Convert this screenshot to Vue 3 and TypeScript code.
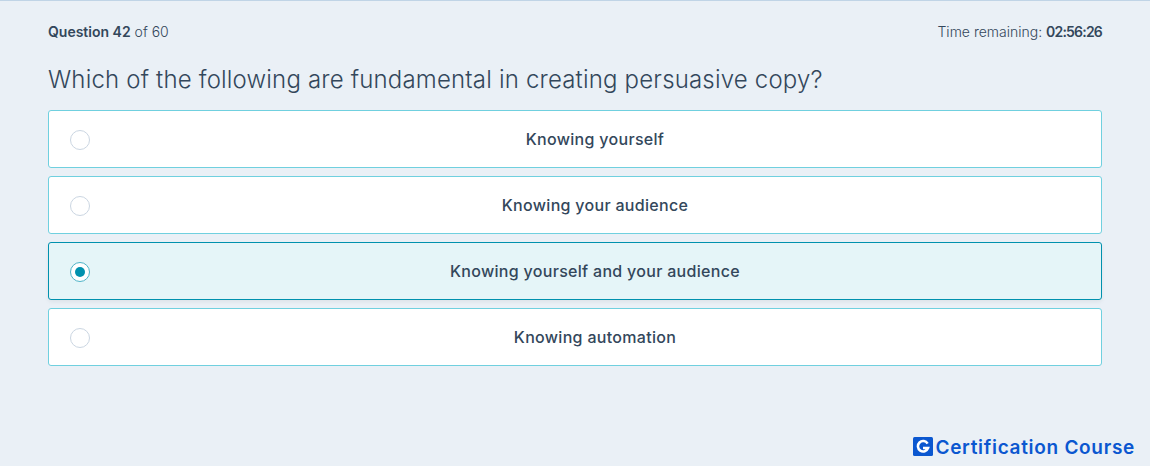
<script setup lang="ts">
interface Option { id: number; label: string }
const options: Option[] = [
  { id: 1, label: 'Knowing yourself' },
  { id: 2, label: 'Knowing your audience' },
  { id: 3, label: 'Knowing yourself and your audience' },
  { id: 4, label: 'Knowing automation' },
]
const selected = 3
</script>

<template>
  <div class="page">
    <div class="meta">
      <span><b>Question 42</b> of 60</span>
      <span>Time remaining: <b class="clock">02:56:26</b></span>
    </div>
    <h1 class="title">Which of the following are fundamental in creating persuasive copy?</h1>
    <div class="options">
      <div v-for="o in options" :key="o.id" class="option" :class="{ on: o.id === selected }">
        <span class="radio"><span v-if="o.id === selected" class="dot"></span></span>
        <span class="label">{{ o.label }}</span>
      </div>
    </div>
    <div class="brand">
      <svg class="mark" width="20" height="19" viewBox="0 0 20 19">
        <rect width="20" height="19" rx="1.5" fill="#0b57d0" />
        <path d="M14.6 6.6A5.2 5.2 0 1 0 15 11H10" fill="none" stroke="#fff" stroke-width="2.6" />
      </svg>
      <span class="brand-text">Certification Course</span>
    </div>
  </div>
</template>

<style>
html, body { margin: 0; padding: 0; }
</style>

<style scoped>
.page {
  position: relative;
  box-sizing: border-box;
  width: 1150px;
  height: 466px;
  overflow: hidden;
  padding: 0 48px;
  background: #eaf0f6;
  border-top: 1px solid #c0d4e6;
  color: #33475b;
  font-family: Inter, sans-serif;
}
.meta {
  display: flex;
  justify-content: space-between;
  padding-top: 22px;
  font-size: 14px;
  line-height: 18px;
  font-weight: 300;
}
.meta b { font-weight: 600; }
.meta .clock { letter-spacing: -0.8px; }
.title {
  margin: 17px 0 0;
  font-size: 24px;
  line-height: 44px;
  font-weight: 300;
  letter-spacing: 0.18px;
}
.options {
  display: flex;
  flex-direction: column;
  gap: 8px;
  margin-top: 8px;
}
.option {
  position: relative;
  box-sizing: border-box;
  height: 58px;
  padding-left: 40px;
  display: flex;
  align-items: center;
  justify-content: center;
  background: #fff;
  border: 1px solid #70d0df;
  border-radius: 3px;
}
.option.on {
  background: #e5f5f8;
  border-color: #0091ae;
  box-shadow: 0 2px 4px rgba(0, 0, 0, 0.06);
}
.radio {
  position: absolute;
  left: 21px;
  top: 19px;
  box-sizing: border-box;
  width: 20px;
  height: 20px;
  display: flex;
  align-items: center;
  justify-content: center;
  background: #fff;
  border: 1px solid #cbd6e2;
  border-radius: 50%;
}
.on .radio { border: 1.5px solid #4fb4c8; }
.dot {
  width: 10px;
  height: 10px;
  border-radius: 50%;
  background: #0091ae;
}
.label {
  font-size: 16px;
  font-weight: 500;
  letter-spacing: 0.3px;
}
.brand {
  position: absolute;
  right: 15px;
  bottom: 8px;
  display: flex;
  align-items: flex-start;
  gap: 2px;
  color: #0b57d0;
}
.brand-text {
  margin-top: 1px;
  font-size: 19px;
  font-weight: 600;
  line-height: 20px;
  letter-spacing: 0.7px;
}
</style>
